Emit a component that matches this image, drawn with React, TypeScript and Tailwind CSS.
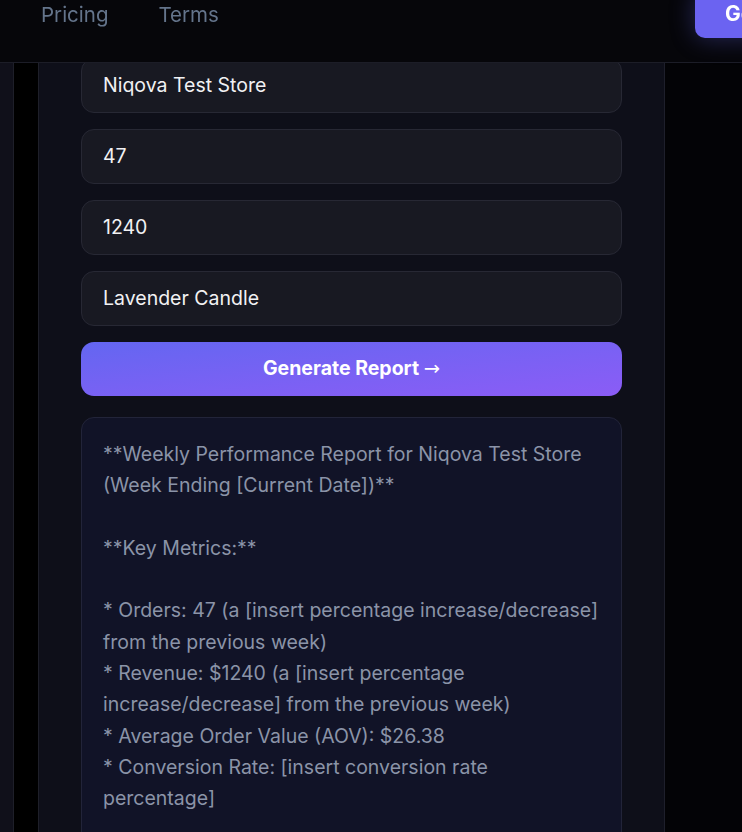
const REPORT = `**Weekly Performance Report for Niqova Test Store (Week Ending [Current Date])**

**Key Metrics:**

* Orders: 47 (a [insert percentage increase/decrease] from the previous week)
* Revenue: $1240 (a [insert percentage increase/decrease] from the previous week)
* Average Order Value (AOV): $26.38
* Conversion Rate: [insert conversion rate percentage]

**Top Product:**

* Lavender Candle`;

const FIELDS = ['Niqova Test Store', '47', '1240', 'Lavender Candle'];

const Header = () => (
	<header className="fixed top-0 left-0 right-0 z-10 h-[63px] bg-[#06060a] border-b border-[#1c1d27]">
		<nav className="flex items-start h-full">
			<a className="ml-[41px] mt-[1px] text-[20.5px] leading-[28px] text-[#64748b]">Pricing</a>
			<a className="ml-[50px] mt-[1px] text-[20.5px] leading-[28px] text-[#64748b]">Terms</a>
			<button className="ml-auto mr-[-60px] -mt-[10px] h-[48px] w-[107px] rounded-[10px] bg-[#6b63f1] shadow-[0_0_24px_rgba(99,102,241,0.35)] pl-[30px] text-left text-[21px] font-bold text-white">
				Get
			</button>
		</nav>
	</header>
);

export default function App() {
	return (
		<div className="min-h-screen bg-[#030306] overflow-hidden" style={{ fontFamily: 'Inter, "Noto Sans", sans-serif' }}>
			<Header />
			<div className="flex min-h-[832px]">
				<div className="w-[14px] shrink-0 bg-[#10101a] border-r border-[#1e1f29]" />
				<div className="w-[25px] shrink-0 bg-black border-r border-[#1e1f29]" />
				<main className="w-[626px] shrink-0 bg-[#0e0f19] border-r border-[#1e1f2b] px-[42px] pt-[58px]">
					<div className="flex flex-col gap-[16px]">
						{FIELDS.map(value => (
							<div
								key={value}
								className="h-[55px] flex items-center rounded-[13px] bg-[#181922] border border-[#272834] px-[21px] text-[19.5px] text-[#f1f1f3]"
							>
								{value}
							</div>
						))}
						<button className="h-[54px] rounded-[13px] bg-linear-to-br from-[#6366f1] to-[#8b5cf6] text-[19.5px] font-bold text-white">
							Generate Report{' '}
							<span className="font-normal" style={{ fontFamily: '"DejaVu Sans", sans-serif' }}>
								→
							</span>
						</button>
					</div>
					<div className="mt-[21px] rounded-[13px] bg-[#111327] border border-[#222439] pl-[21px] pr-[18px] pt-[21px] pb-[40px]">
						<p className="whitespace-pre-wrap text-[19.5px] leading-[31.3px] text-[#8b94a8]">{REPORT}</p>
					</div>
				</main>
				<div className="flex-1 bg-[#030306]" />
			</div>
		</div>
	);
}
